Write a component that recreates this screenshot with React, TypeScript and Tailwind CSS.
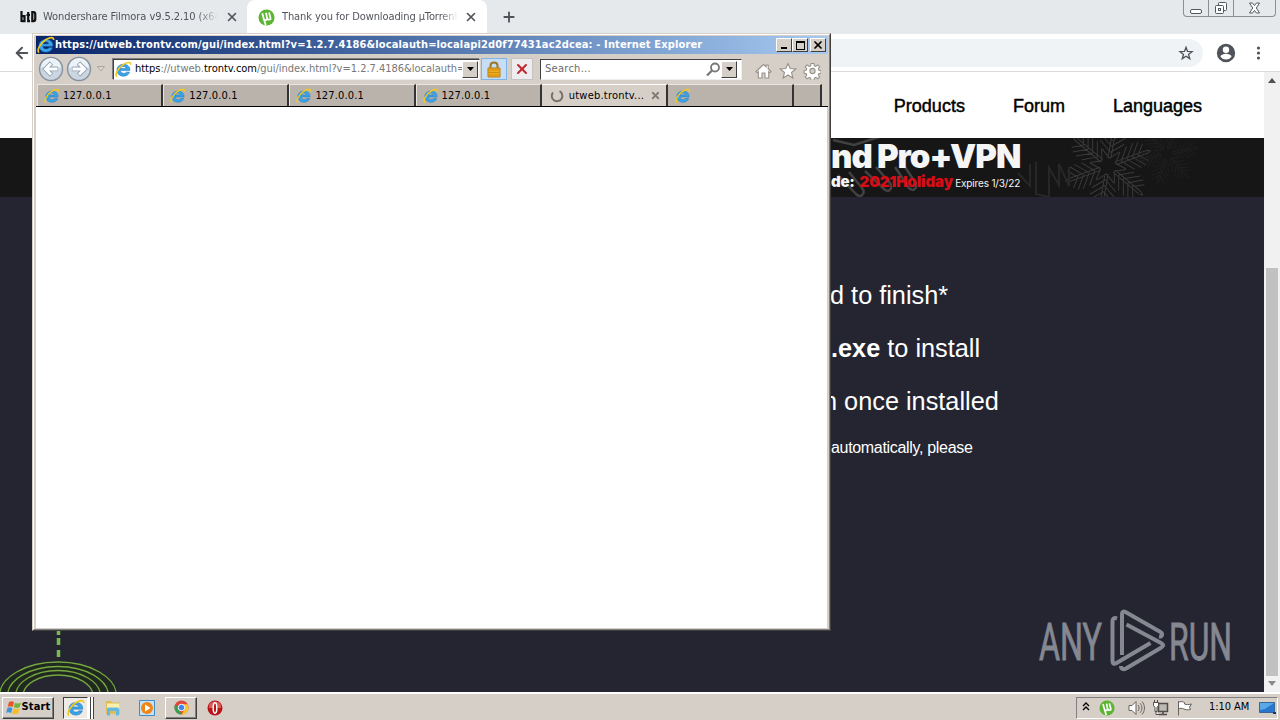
import type { ReactNode } from 'react';
import { ArrowLeft, Plus, X } from 'lucide-react';

const TAB_LABELS = ['127.0.0.1', '127.0.0.1', '127.0.0.1', '127.0.0.1'];

function IeIcon({ size = 16 }: { size?: number }) {
  return (
    <svg width={size} height={size} viewBox="0 0 16 16" fill="none" className="shrink-0">
      <path d="M14 9H5.100c.2 2.900 4.200 3.400 5.500 1.500h3.100C11.900 16.300 1.800 15.300 1.800 8.600c0-7.400 13-7.500 12.200.4ZM5.200 7.100h5.200c-.3-2.700-4.700-2.700-5.200 0Z" fill="#3ba3e6" stroke="#1c78c4" strokeWidth=".5" />
      <path d="M1.800 14.800C-.8 12.500 3.500 6.200 7.700 3.400c3.500-2.400 7.300-3 7.100.1" stroke="#f2c81d" strokeWidth="1.500" />
    </svg>
  );
}

function UtIcon({ size = 17 }: { size?: number }) {
  return (
    <svg width={size} height={size} viewBox="0 0 18 18" fill="none" className="shrink-0">
      <circle cx="9" cy="9" r="8.500" fill="#5cb531" />
      <path d="M4.500 4.500 6 10c.6 2.600 4 2.200 3.600-.6L8.500 4M9.600 9.600c.5 2.200 2.700 2.100 4.300.8M11.700 3.800l1.700 6.600M6 10l2.200 7" stroke="#fff" strokeWidth="1.900" />
    </svg>
  );
}

function NavCircle({ flip = false }: { flip?: boolean }) {
  return (
    <svg width="26" height="26" viewBox="0 0 26 26" fill="none" className={flip ? '-scale-x-100' : ''}>
      <circle cx="13" cy="13" r="11.500" fill="#ccd6e0" stroke="#8492a0" strokeWidth="1.400" />
      <path d="M3 12a10 10 0 0 1 20 0c-6-3-14-3-20 0Z" fill="#edf2f6" />
      <path d="M20 13H8M13.500 7 7.500 13l6 6" stroke="#8fa2b4" strokeWidth="4.600" />
      <path d="M19.500 13H8M13 7.500 7.500 13l5.500 5.500" stroke="#fff" strokeWidth="2.900" />
    </svg>
  );
}

function ClassicButton({ children, className = '' }: { children: ReactNode; className?: string }) {
  return (
    <div className={`flex items-center justify-center border border-t-white border-l-white border-r-[#404040] border-b-[#404040] bg-[#d6cfc7] ${className}`}>
      {children}
    </div>
  );
}

function DropArrow() {
  return (
    <ClassicButton className="h-[17px] w-[16px] shrink-0">
      <svg width="7" height="4" viewBox="0 0 7 4">
        <path d="M0 0h7L3.500 4Z" fill="#000" />
      </svg>
    </ClassicButton>
  );
}

function ChromeHeader() {
  return (
    <header className="font-['DejaVu_Sans_Condensed','DejaVu_Sans',sans-serif] text-[11px] text-[#50545a]">
      <div className="flex h-[34px] items-start bg-[#e5e9ec]">
        <div className="flex h-[34px] w-[247px] items-center pl-5">
          <svg width="17" height="14" viewBox="0 0 17 14" fill="none" stroke="#111" strokeWidth="2.200">
            <path d="M1.500 1v11M1.500 6.200h3v5h-3M8.200 2v9.200H10M6.500 5h3.500M12.300 2.200h1.500c1.500 0 1.500 1 1.500 4.500s0 4.500-1.500 4.500h-1.500Z" />
          </svg>
          <span className="ml-[6px] w-[175px] overflow-hidden whitespace-nowrap tracking-[-0.070px] [mask-image:linear-gradient(to_right,black_88%,transparent)]">
            Wondershare Filmora v9.5.2.10 (x64)
          </span>
          <X className="ml-[7px] size-[14px]" strokeWidth={2.800} />
        </div>
        <div className="flex h-[34px] w-[240px] items-center rounded-t-lg bg-white pl-[11px]">
          <UtIcon />
          <span className="ml-[7px] w-[176px] overflow-hidden whitespace-nowrap tracking-[-0.100px] [mask-image:linear-gradient(to_right,black_90%,transparent)]">
            Thank you for Downloading µTorrent
          </span>
          <X className="ml-[6px] size-[14px]" strokeWidth={2.800} />
        </div>
        <Plus className="mt-[9px] ml-[14px] size-4" strokeWidth={2.800} />
        <div className="mr-[4px] ml-auto flex h-[17px] w-[93px] rounded-b-[4px] border border-t-0 border-[#8b8f94]">
          <div className="flex w-[25px] items-end justify-center border-r border-[#8b8f94] pb-[2px]">
            <div className="h-[5px] w-[12px] rounded-[2px] border border-[#54585e] bg-white" />
          </div>
          <div className="flex w-[25px] items-center justify-center border-r border-[#8b8f94]">
            <svg width="14" height="14" viewBox="0 0 14 14" fill="#fff" stroke="#54585e">
              <rect x="4.500" y="1.500" width="8" height="8" rx="1" />
              <rect x="1.500" y="4.500" width="8" height="8" rx="1" />
              <rect x="4.500" y="7.500" width="2" height="2" />
            </svg>
          </div>
          <div className="flex flex-1 items-center justify-center">
            <svg width="13" height="12" viewBox="0 0 13 12" fill="#fff" stroke="#54585e">
              <path d="M1.500 1h3l2 2.500L8.500 1h3L8.300 6l3.200 5h-3l-2-2.500L4.500 11h-3l3.200-5Z" />
            </svg>
          </div>
        </div>
      </div>
      <div className="flex h-[38px] items-center border-b border-[#d9dbdd] bg-white pl-[13px]">
        <ArrowLeft className="size-[18px]" strokeWidth={2.600} />
        <div className="ml-[70px] flex h-7 w-[1102px] items-center justify-end rounded-full bg-[#f0f3f5] pr-[9px]">
          <svg width="16" height="16" viewBox="0 0 24 24" fill="none" stroke="#50545a" strokeWidth="2">
            <path d="m12 3.500 2.300 6.200 6.700.3-5.200 4.100 1.800 6.400-5.600-3.700-5.600 3.700 1.800-6.400L3 10l6.700-.3Z" />
          </svg>
        </div>
        <svg className="ml-[12px]" width="22" height="22" viewBox="0 0 24 24" fill="#50545a">
          <path d="M12 2a10 10 0 1 0 0 20 10 10 0 0 0 0-20Zm0 3a3.500 3.500 0 1 1 0 7 3.500 3.500 0 0 1 0-7Zm0 14.200a7.200 7.200 0 0 1-6-3.200c0-2 4-3.100 6-3.100s6 1.100 6 3.100a7.200 7.200 0 0 1-6 3.200Z" />
        </svg>
        <svg className="ml-[19px]" width="5" height="16" viewBox="0 0 5 16" fill="#50545a">
          <circle cx="2.500" cy="3" r="1.600" />
          <circle cx="2.500" cy="8" r="1.600" />
          <circle cx="2.500" cy="13" r="1.600" />
        </svg>
      </div>
    </header>
  );
}

function Snowflakes() {
  const arm = 'M-1.500-8V-42l1.500-3 1.500 3V-8M0-8l-9-8M0-8l9-8M0-14l-12-10M0-14l12-10M0-20l-13-11M0-20l13-11M0-26l-12-10M0-26l12-10M0-32l-9-8M0-32l9-8';
  const angles = [10, 70, 130, 190, 250, 310];
  return (
    <svg className="absolute top-0 left-[831px]" width="433" height="59" fill="none" stroke="#3a3a3a" strokeWidth="1">
      <g transform="translate(277 28)">
        {angles.map((a) => (
          <path key={a} d={arm} transform={`rotate(${a})`} />
        ))}
      </g>
      <path d="M199 26v22l-12-13M205 24v32l13 3V30l10 17V26l10 22V29" stroke="#272727" strokeWidth="2" />
      <g transform="translate(336 16) scale(.7)" stroke="#212121">
        {angles.map((a) => (
          <path key={a} d={arm} transform={`rotate(${a + 8})`} />
        ))}
      </g>
      <path d="m2 2 21 5 25-8M7 37l18 19c5 5 10-1 6-6L18 34M34 33l19 18c5 5 9-1 6-6L45 29M64 29l14 21c5 5 9-1 6-6L74 29" stroke="#414141" strokeWidth="2.500" />
    </svg>
  );
}

function AnyRunLogo() {
  return (
    <svg className="absolute top-[412px] left-[1034px]" width="202" height="66" viewBox="0 0 202 66">
      <g fill="#858791" stroke="#858791" strokeWidth=".9" className="font-['Roboto','Liberation_Sans',sans-serif]" fontSize="52">
        <text x="5" y="50.500" textLength="63" lengthAdjust="spacingAndGlyphs">ANY</text>
        <text x="135" y="50.500" textLength="63" lengthAdjust="spacingAndGlyphs">RUN</text>
      </g>
      <g fill="none" stroke="#858791" strokeWidth="4" strokeLinejoin="round">
        <path d="M88 46V5c0-2.500 1.500-3 3.500-2l35 20c2.500 1.500 2 5-1.500 4.500" />
        <path d="M92.500 15.500 127 34c3 1.700 3 3 0 4.700L92 59.500c-2.500 1.500-5 .5-5-2.500" />
        <path d="M83 9.500c-3-1-4.500 0-4.500 2.500v40c0 3 1.500 3.500 4 2l34-20" />
      </g>
    </svg>
  );
}

function Page() {
  return (
    <div className="flex h-[620px]">
      <main className="w-[1264px] overflow-hidden font-['Liberation_Sans',sans-serif]">
        <nav className="flex h-[66px] items-center justify-end gap-12 bg-white pt-[2px] pr-[62px] text-[18px] text-black [-webkit-text-stroke:0.450px_black]">
          <span>Products</span>
          <span>Forum</span>
          <span>Languages</span>
        </nav>
        <section className="relative h-[59px] bg-[#161616] pl-[831px] font-['Inter',sans-serif] font-black whitespace-nowrap text-[#f5f5f5]">
          <Snowflakes />
          <div className="relative pt-[2px] pb-[2px] text-[33px] leading-[32px] tracking-[-1px] word-spacing-normal">
            <span className="tracking-[-0.900px]">nd</span>
            <span className="ml-[5px] tracking-[-1px]">Pro+VPN</span>
          </div>
          <div className="relative flex items-baseline text-[15px] leading-4">
            <span className="tracking-[-0.300px]">de:</span>
            <span className="ml-[5px] tracking-[-0.050px] text-[#d60d16]">2021Holiday</span>
            <span className="ml-[2px] text-[10px] font-normal tracking-[-0.160px]">Expires 1/3/22</span>
          </div>
        </section>
        <section className="relative h-[495px] bg-[#242531] text-white">
          <div className="pt-[72px] pl-[831px] text-[25.300px] leading-[53px] whitespace-nowrap">
            <p className="-ml-px">d to finish*</p>
            <p>
              <b>.exe</b> to install
            </p>
            <p className="-ml-2">n once installed</p>
            <p className="text-base leading-[39px] tracking-[-0.320px]">automatically, please</p>
          </div>
          <svg className="absolute bottom-0 left-0" width="120" height="64" fill="none" stroke="#75a83f">
            <path d="M58.500 2v5M58.500 10v7M58.500 22v7" stroke="#78b950" strokeWidth="3.500" />
            <ellipse cx="58" cy="68" rx="58.500" ry="34" strokeWidth="1.300" fill="#20291f" />
            <ellipse cx="58" cy="68" rx="50.500" ry="29.500" strokeWidth="1.300" />
            <ellipse cx="58" cy="68" rx="42.500" ry="25.500" strokeWidth="1.300" />
            <ellipse cx="58" cy="68" rx="35" ry="21" strokeWidth="1.300" fill="#252630" />
          </svg>
          <AnyRunLogo />
        </section>
      </main>
      <aside className="flex w-4 flex-col items-center bg-[#f1f1f1]">
        <svg width="16" height="196" className="shrink-0">
          <path d="M4 11h8L8 6Z" fill="#505050" />
        </svg>
        <div className="h-[408px] w-[12px] bg-[#c1c1c1]" />
        <svg width="16" height="16">
          <path d="M4 5h8l-4 5Z" fill="#8a8a8a" />
        </svg>
      </aside>
    </div>
  );
}

function TitleBar() {
  return (
    <div className="flex h-[18px] items-center bg-linear-to-r from-[#0a246a] to-[#a6caf0] pr-[2px] pl-[1px] text-white">
      <IeIcon size={18} />
      <span className="flex-1 text-[11px] font-bold whitespace-nowrap tracking-[0.140px]">
        https://utweb.trontv.com/gui/index.html?v=1.2.7.4186&localauth=localapi2d0f77431ac2dcea: - Internet Explorer
      </span>
      <ClassicButton className="h-[14px] w-[16px]">
        <div className="mt-[6px] h-[2px] w-[6px] bg-black" />
      </ClassicButton>
      <ClassicButton className="h-[14px] w-[16px]">
        <div className="h-[9px] w-[9px] border border-t-2 border-black" />
      </ClassicButton>
      <ClassicButton className="ml-[2px] h-[14px] w-[16px] text-black">
        <X className="size-[12px]" strokeWidth={3.500} />
      </ClassicButton>
    </div>
  );
}

function IeToolbar() {
  return (
    <div className="flex h-[30px] items-center pl-[2px]">
      <NavCircle />
      <div className="ml-[2px]">
        <NavCircle flip />
      </div>
      <svg className="ml-[5px]" width="8" height="6" viewBox="0 0 8 6">
        <path d="M.5.5h7L4 5Z" fill="#ded8d1" stroke="#aaa39b" />
      </svg>
      <div className="ml-[8px] flex h-[21px] w-[367px] items-center border border-t-[#404040] border-l-[#404040] border-r-[#eee] border-b-[#eee] bg-white pl-[1px] shadow-[-1px_-1px_0_#808080]">
        <IeIcon size={17} />
        <span className="ml-[3px] w-[327px] overflow-hidden pt-px text-[11px] whitespace-nowrap tracking-[-0.020px] text-[#777]">
          <span className="text-black">https</span>://utweb.<span className="text-black">trontv.com</span>/gui/index.html?v=1.2.7.4186&localauth=
        </span>
        <DropArrow />
      </div>
      <div className="ml-[1px] flex h-[22px] w-[26px] items-center justify-center border border-[#7fb4e6] bg-[#c5ddf5]">
        <svg width="14" height="17" viewBox="0 0 14 17" fill="none">
          <path d="M3.500 8V4.500c0-4 7-4 7 0V8" stroke="#9b7627" strokeWidth="2" />
          <path d="M1 7h12v9H1Z" fill="#eeb11d" stroke="#bc7913" />
          <path d="M2 9h10M2 11.500h10M2 14h10" stroke="#c98212" strokeWidth=".8" />
        </svg>
      </div>
      <div className="ml-[4px] flex h-[22px] w-[22px] items-center justify-center border border-[#c5c2c5] bg-[#eeecee]">
        <X className="size-[16px] text-[#bd2932]" strokeWidth={3} />
      </div>
      <div className="ml-[7px] flex h-[21px] w-[202px] items-center border border-t-[#404040] border-l-[#404040] border-r-[#eee] border-b-[#eee] bg-white pr-[4px] pl-[4px] text-[11px] text-[#6b6b6b]">
        <span className="flex-1 pt-px tracking-[0.280px]">Search...</span>
        <svg width="15" height="15" viewBox="0 0 15 15" fill="none" stroke="#777" strokeWidth="1.800">
          <circle cx="9" cy="5.500" r="4" />
          <path d="m6 8.500-5 5" strokeWidth="2.300" />
        </svg>
        <DropArrow />
      </div>
      <svg className="mt-[4px] ml-[13px]" width="66" height="18" viewBox="0 0 66 18" fill="#fff" stroke="#98918a" strokeWidth="1.100">
        <path d="m1 9.500 7.500-7 2.500 2.300V3h2.200v3.700L16 9.500l-1.200 1.200-1.100-1v6.300H10v-5H7v5H3.300V9.700l-1.100 1Z" />
        <path d="m33 1.500 2.200 5 5.600.4-4.300 3.600 1.400 5.500-4.900-3-4.900 3 1.400-5.500-4.300-3.600 5.600-.4Z" />
        <g transform="translate(57.500 9)">
          <path d="m-1.500-7.500h3l.4 2.300 1.400.6 2-1.500 1.900 1.900-1.400 2 .6 1.400 2.100.3v2.700l-2.100.4-.6 1.400 1.400 2-1.900 1.900-2-1.400-1.400.6-.4 2.100h-3l-.4-2.100-1.400-.6-2 1.400-1.900-1.900 1.400-2-.6-1.400-2-.4v-2.700l2-.3.6-1.400-1.400-2 1.900-1.900 2 1.500 1.400-.6Z" />
          <circle r="2.600" fill="#d6cfc7" />
        </g>
      </svg>
    </div>
  );
}

function IeTabs() {
  return (
    <div className="flex h-[23px] border-b border-black pl-[1px] text-[11px] text-black">
      {TAB_LABELS.map((label, i) => (
        <div key={i} className="flex w-[126.200px] items-center border-t border-r-2 border-l border-t-[#e9e5e0] border-r-[#333] border-l-[#e9e5e0] bg-[#bab3ab] pl-[6px]">
          <IeIcon />
          <span className="ml-[3px] pt-[2px] tracking-[0.160px]">{label}</span>
        </div>
      ))}
      <div className="flex w-[126.200px] items-center border-t border-r-2 border-t-white border-r-[#333] bg-[#d6cfc7] pl-[8px]">
        <svg width="14" height="14" viewBox="0 0 14 14" fill="none" stroke="#77716b" strokeWidth="2">
          <path d="M9.500 2.200A5.300 5.300 0 1 1 3 3.500" />
        </svg>
        <span className="ml-[5px] w-[76px] pt-[2px] tracking-[0.220px] whitespace-nowrap">utweb.trontv...</span>
        <X className="ml-[5px] size-[11px] text-[#817b75]" strokeWidth={4} />
      </div>
      <div className="flex w-[126px] items-center border-t border-r-2 border-t-[#e9e5e0] border-r-[#333] bg-[#bab3ab] pl-[7px]">
        <IeIcon />
      </div>
      <div className="w-[28px] border-t border-r-2 border-t-[#e9e5e0] border-r-[#333] bg-[#bab3ab]" />
    </div>
  );
}

function IeWindow() {
  return (
    <div className="absolute top-[33px] left-[32px] flex h-[598px] w-[799px] flex-col border border-t-[#d6cfc7] border-l-[#d6cfc7] border-r-[#404040] border-b-[#404040] bg-[#d6cfc7] font-['DejaVu_Sans_Condensed','DejaVu_Sans',sans-serif]">
      <div className="flex flex-1 flex-col border border-t-white border-l-white border-r-[#808080] border-b-[#808080] pt-px pr-px pb-px pl-[2px]">
        <TitleBar />
        <IeToolbar />
        <IeTabs />
        <div className="mr-px flex-1 bg-white" />
      </div>
    </div>
  );
}

function Taskbar() {
  return (
    <footer className="flex h-7 items-center border-t-2 border-white bg-[#d6cfc7] pt-[1px] pr-[2px] pl-[2px] font-['DejaVu_Sans_Condensed','DejaVu_Sans',sans-serif] text-[11px] text-black">
      <ClassicButton className="h-[22px] w-[52px] gap-[1px] font-bold shadow-[inset_-1px_-1px_0_#808080]">
        <svg width="17" height="16" viewBox="0 0 17 16" className="shrink-0">
          <path d="M3 2c2-1 3.500-1 5 .2L6.800 7C5 5.800 3.500 6 1.700 6.800Z" fill="#e5572a" />
          <path d="M9 2.700c2 1 4 1 6-.2l-1.300 4.800c-2 1-4 1-5.900 0Z" fill="#71b63c" />
          <path d="M1.400 8c2-1 3.500-.8 5 .2L5.200 13C3.500 12 2 12 .2 12.800Z" fill="#4093d6" />
          <path d="M7.400 8.600c2 1 4 1 6 0l-1.300 4.800c-2 1-4 1-5.900 0Z" fill="#f6be26" />
        </svg>
        <span className="-ml-[2px] tracking-[0.150px]">Start</span>
      </ClassicButton>
      <div className="ml-[9px] flex h-[22px] w-[31px]">
        <div className="flex w-[25px] items-center justify-center border border-t-[#404040] border-l-[#404040] border-white bg-[#eeebe7]">
          <IeIcon size={18} />
        </div>
        <div className="w-[3px] border-r border-[#404040] bg-white" />
        <div className="w-[3px] border-r border-[#404040] bg-white" />
      </div>
      <svg className="ml-[10px]" width="18" height="18" viewBox="0 0 18 18">
        <path d="M2 2h5l1 1.500h8V15H2Z" fill="#e0bd58" />
        <path d="M3 4.500h12.500v6H3Z" fill="#fbf0ab" />
        <path d="M3 16.500V10c0-1 1-1.500 2-1.500h8c1 0 2 .5 2 1.500v6.500h-3V12H6v4.500Z" fill="#64b9df" />
      </svg>
      <svg className="ml-[17px]" width="16" height="16" viewBox="0 0 16 16">
        <path d="M.5.500h15v15H.5Z" fill="#c6e2f6" stroke="#438dc7" />
        <circle cx="8" cy="8" r="6" fill="#ef8519" />
        <path d="m6 4.500 5.500 3.500L6 11.500Z" fill="#fff" />
      </svg>
      <ClassicButton className="ml-[10px] h-[22px] w-[32px] shadow-[inset_-1px_-1px_0_#808080]">
        <svg width="15" height="15" viewBox="0 0 16 16">
          <circle cx="8" cy="8" r="7.500" fill="#dc483a" />
          <path d="M1.500 4.200 5 10.200 8 15.500A7.500 7.500 0 0 1 1.500 4.200Z" fill="#34a153" />
          <path d="M8 4.600h6.700A7.500 7.500 0 0 1 8 15.500l3.200-5.500Z" fill="#f6c52c" />
          <circle cx="8" cy="8" r="3.500" fill="#4285e8" stroke="#fff" strokeWidth="1" />
        </svg>
      </ClassicButton>
      <svg className="ml-[10px]" width="16" height="16" viewBox="0 0 16 16">
        <circle cx="8" cy="8" r="7.500" fill="#b91418" />
        <path d="M2 5a7 7 0 0 1 12 0v3H2Z" fill="#da5b58" />
        <ellipse cx="8" cy="8" rx="1.800" ry="5.200" fill="#b91418" stroke="#fff" strokeWidth="1.500" />
      </svg>
      <div className="ml-auto flex h-[22px] w-[202px] items-center border border-t-[#808080] border-l-[#808080] border-r-white border-b-white pr-px pl-[5px]">
        <svg width="8" height="9" viewBox="0 0 8 9" fill="none" stroke="#000" strokeWidth="1.300" className="mb-[2px]">
          <path d="m1 4 3-3 3 3M1 8l3-3 3 3" />
        </svg>
        <div className="ml-[9px]">
          <UtIcon size={16} />
        </div>
        <svg className="ml-[13px]" width="17" height="16" viewBox="0 0 17 16" fill="#fff" stroke="#67635f" strokeWidth="1">
          <path d="M1 5.500h3l4-4v13l-4-4H1Z" />
          <path d="M10 5c1.500 2 1.500 4 0 6M12 3.300c2.600 3 2.600 6.400 0 9.400M14 1.500c3.300 4 3.300 9 0 13" fill="none" />
        </svg>
        <svg className="ml-[7px]" width="17" height="16" viewBox="0 0 17 16" fill="none" stroke="#4f4c49">
          <path d="M6.500 3.500h9v8h-9Z" fill="#bcb9b5" strokeWidth="1.500" />
          <path d="M7 14.500h8M11 12v2" strokeWidth="1.500" />
          <path d="M1.500 2.500h5v3l-1.500 2v4h-2v-4l-1.500-2ZM2.500 0v3M5.500 0v3M4 12v2.500h3" fill="#fff" />
        </svg>
        <svg className="ml-[7px]" width="17" height="16" viewBox="0 0 17 16" fill="#fff" stroke="#67635f">
          <path d="M2.500 15.500V1M3 2c3-1 4 0 5.500.5V4c2 .8 3.500.8 7 0l-2 3 1 2.500c-3 .7-5 .3-7-.7-2-.6-3-.6-4.500 0" />
        </svg>
        <span className="ml-[16px] whitespace-nowrap tracking-[-0.050px]">1:10 AM</span>
        <svg className="ml-auto" width="17" height="14" viewBox="0 0 17 14">
          <path d="M.5 1.500h15v10H.5Z" fill="#2977cc" stroke="#35679b" />
          <path d="M1 2h14l-9 6-5 1Z" fill="#5ba8e8" />
          <path d="M8 13h6v-2h3v2Z" fill="#183b6b" />
        </svg>
      </div>
    </footer>
  );
}

export default function App() {
  return (
    <div className="relative h-[720px] w-[1280px] overflow-hidden bg-white">
      <ChromeHeader />
      <Page />
      <Taskbar />
      <IeWindow />
    </div>
  );
}
